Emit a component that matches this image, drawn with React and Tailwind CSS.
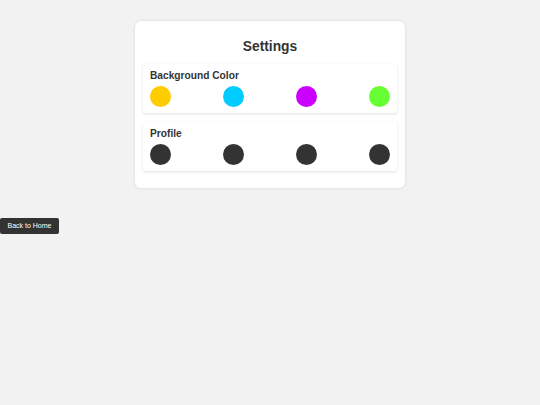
import React from "react";

const bgColors = ["#ffcc00", "#00ccff", "#cc00ff", "#66ff33"];
const profileColors = ["#333333", "#333333", "#333333", "#333333"];

const Section = ({ title, colors }) => (
  <div className="bg-white rounded-[3px] shadow-[0_1px_3px_rgba(0,0,0,0.12)] px-[7px] pt-[5px] pb-[6px]">
    <p className="text-[10.2px] leading-[14px] font-bold text-[#333]">{title}</p>
    <div className="flex justify-between mt-[3px]">
      {colors.map((c, i) => (
        <div key={i} className="w-[21px] h-[21px] rounded-full" style={{ backgroundColor: c }} />
      ))}
    </div>
  </div>
);

export default function App() {
  return (
    <div className="min-h-[405px] bg-[#f2f2f2] pt-[21px]" style={{ fontFamily: '"Liberation Sans", Arial, sans-serif' }}>
      <div className="mx-auto w-[270px] bg-white rounded-[6px] shadow-[0_0_3px_rgba(0,0,0,0.12)] px-[8px] pt-[16px] pb-[17px]">
        <h1 className="text-center text-[13.8px] leading-[20px] font-bold text-[#333] mb-[7px]">Settings</h1>
        <div className="flex flex-col gap-[9px]">
          <Section title="Background Color" colors={bgColors} />
          <Section title="Profile" colors={profileColors} />
        </div>
      </div>
      <button className="mt-[30px] block bg-[#333] text-white text-[7px] leading-[16px] h-[16px] w-[59px] whitespace-nowrap rounded-[2px] text-center">
        Back to Home
      </button>
    </div>
  );
}
